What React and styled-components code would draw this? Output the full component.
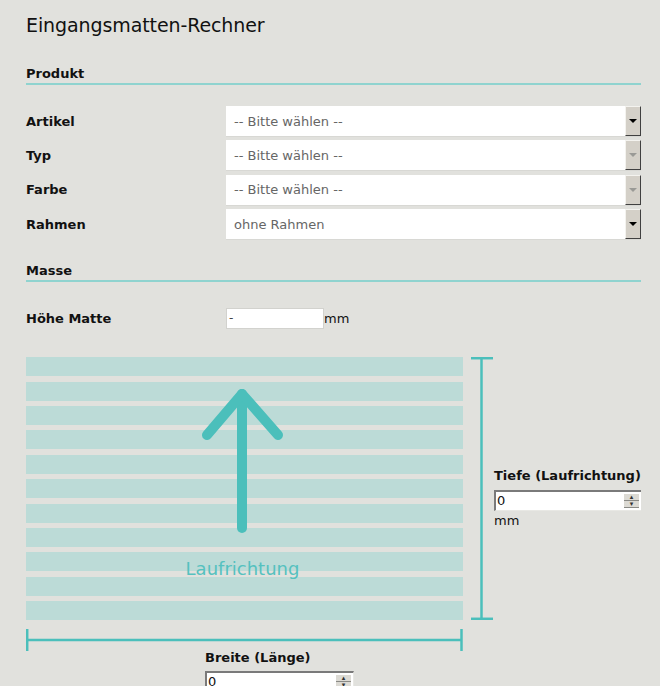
import * as React from 'react'
import styled, { createGlobalStyle } from 'styled-components'

const colors = {
  page: '#e1e1dd',
  text: '#111111',
  muted: '#666666',
  rule: '#8fd3cf',
  teal: '#4bbfbb',
  stripe: '#bcdbd7',
  button: '#d4d0c8',
}

const Global = createGlobalStyle`
  html, body {
    margin: 0;
    background: ${colors.page};
  }
  body {
    font-family: "DejaVu Sans", Verdana, sans-serif;
    color: ${colors.text};
  }
`

const selects = [
  { label: 'Artikel', value: '-- Bitte wählen --' },
  { label: 'Typ', value: '-- Bitte wählen --', disabled: true },
  { label: 'Farbe', value: '-- Bitte wählen --', disabled: true },
  { label: 'Rahmen', value: 'ohne Rahmen' },
]

const Arrow = () => (
  <svg width='437' height='263' viewBox='0 0 437 263'>
    <g fill='none' stroke={colors.teal} strokeWidth='10' strokeLinecap='round' strokeLinejoin='round'>
      <line x1='216' y1='37' x2='216' y2='171' />
      <polyline points='181,78 216,37 252,78' />
    </g>
  </svg>
)

const DepthBracket = () => (
  <svg width='31' height='263'>
    <g stroke={colors.teal} strokeWidth='2.5'>
      <line x1='18.5' y1='1' x2='18.5' y2='262' />
      <line x1='8' y1='1.2' x2='30' y2='1.2' />
      <line x1='8' y1='261.8' x2='30' y2='261.8' />
    </g>
  </svg>
)

const WidthBracket = () => (
  <svg width='437' height='22'>
    <g stroke={colors.teal} strokeWidth='2.5'>
      <line x1='1' y1='11' x2='436' y2='11' />
      <line x1='1.2' y1='0' x2='1.2' y2='22' />
      <line x1='435.5' y1='0' x2='435.5' y2='22' />
    </g>
  </svg>
)

const Spinner = ({ width }) => (
  <SpinBox width={width}>
    <SpinValue>0</SpinValue>
    <SpinButtons>
      <SpinButton>▴</SpinButton>
      <SpinButton>▾</SpinButton>
    </SpinButtons>
  </SpinBox>
)

const App = () => {
  return (
    <Root>
      <Global />
      <Title>Eingangsmatten-Rechner</Title>

      <SectionHeading>Produkt</SectionHeading>
      <SelectList>
        {selects.map((s) => (
          <Row key={s.label}>
            <Label>{s.label}</Label>
            <Select>
              <SelectText>{s.value}</SelectText>
              <SelectButton disabled={s.disabled}>
                <Triangle disabled={s.disabled} />
              </SelectButton>
            </Select>
          </Row>
        ))}
      </SelectList>

      <SectionHeading top={23}>Masse</SectionHeading>
      <HeightRow>
        <Label>Höhe Matte</Label>
        <TextInput>-</TextInput>
        <Unit>mm</Unit>
      </HeightRow>

      <Diagram>
        <Mat>
          {Array.from({ length: 11 }).map((_, i) => <Stripe key={i} />)}
          <Overlay>
            <Arrow />
            <Direction>Laufrichtung</Direction>
          </Overlay>
        </Mat>
        <DepthBracket />
        <DepthField>
          <FieldLabel>Tiefe (Laufrichtung)</FieldLabel>
          <Spinner width={148} />
          <Unit>mm</Unit>
        </DepthField>
        <WidthCell>
          <WidthBracket />
          <WidthField>
            <FieldLabel gap={5}>Breite (Länge)</FieldLabel>
            <Spinner width={149} />
          </WidthField>
        </WidthCell>
      </Diagram>
    </Root>
  )
}

const Root = styled.div`
  width: 615px;
  padding: 13px 0 0 26px;
  height: 673px;
  overflow: hidden;
`

const Title = styled.h1`
  margin: 0;
  font-size: 19px;
  line-height: 24px;
  font-weight: normal;
  letter-spacing: -0.1px;
`

const SectionHeading = styled.h2`
  margin: ${({ top }) => (top ? top : 29)}px 0 0;
  padding-bottom: 1px;
  font-size: 13px;
  line-height: 16px;
  font-weight: bold;
  border-bottom: 2px solid ${colors.rule};
`

const SelectList = styled.div`
  display: flex;
  flex-direction: column;
  gap: 3.4px;
  margin-top: 21px;
`

const Row = styled.div`
  display: grid;
  grid-template-columns: 200px 415px;
  align-items: center;
`

const Label = styled.div`
  font-size: 13px;
  font-weight: bold;
  line-height: 16px;
`

const Select = styled.div`
  display: flex;
  align-items: stretch;
  height: 31px;
  background: #ffffff;
  box-sizing: border-box;
  border-bottom: 1px solid #d8d8d4;
`

const SelectText = styled.div`
  flex: 1;
  display: flex;
  align-items: center;
  padding-left: 8px;
  font-size: 13px;
  color: ${colors.muted};
`

const SelectButton = styled.div`
  width: 16px;
  display: flex;
  align-items: center;
  justify-content: center;
  background: ${colors.button};
  box-sizing: border-box;
  border-top: 1px solid #f4f3ef;
  border-left: 1px solid #f4f3ef;
  border-right: 1px solid #404040;
  border-bottom: 1px solid #404040;
`

const Triangle = styled.span`
  width: 0;
  height: 0;
  border-left: 4px solid transparent;
  border-right: 4px solid transparent;
  border-top: 4px solid ${({ disabled }) => (disabled ? '#9a9a96' : '#000000')};
`

const HeightRow = styled.div`
  display: grid;
  grid-template-columns: 200px 98px auto;
  align-items: center;
  margin-top: 26px;
`

const TextInput = styled.div`
  height: 21px;
  box-sizing: border-box;
  background: #ffffff;
  padding-left: 2px;
  font-size: 12px;
  line-height: 19px;
  color: #444444;
  border: 1px solid #d2d2ce;
`

const Unit = styled.span`
  font-size: 13px;
  line-height: 16px;
`

const Diagram = styled.div`
  display: grid;
  grid-template-columns: 437px 31px 148px;
  grid-template-rows: 263px auto;
  margin-top: 28px;
`

const Mat = styled.div`
  position: relative;
  display: flex;
  flex-direction: column;
  justify-content: space-between;
`

const Stripe = styled.div`
  height: 19px;
  background: ${colors.stripe};
`

const Overlay = styled.div`
  position: absolute;
  inset: 0;
  display: flex;
  flex-direction: column;
  align-items: center;
`

const Direction = styled.div`
  position: absolute;
  left: 0;
  width: 433px;
  top: 201px;
  text-align: center;
  font-size: 18px;
  color: #55c1bf;
`

const DepthField = styled.div`
  padding-top: 111px;
  display: flex;
  flex-direction: column;
  align-items: flex-start;
`

const FieldLabel = styled.div`
  font-size: 13px;
  font-weight: bold;
  line-height: 16px;
  margin-bottom: ${({ gap }) => (gap ? gap : 6)}px;
`

const SpinBox = styled.div`
  width: ${({ width }) => width}px;
  height: 21px;
  box-sizing: border-box;
  display: flex;
  align-items: center;
  background: #ffffff;
  border-top: 2px solid #7a7a7a;
  border-left: 2px solid #7a7a7a;
  border-right: 1px solid #e8e8e4;
  border-bottom: 1px solid #e8e8e4;
  margin-bottom: 2px;
`

const SpinValue = styled.span`
  flex: 1;
  padding-left: 1px;
  font-size: 13px;
  line-height: 16px;
`

const SpinButtons = styled.div`
  display: flex;
  flex-direction: column;
  width: 15px;
  height: 14px;
  margin-right: 2px;
`

const SpinButton = styled.div`
  flex: 1;
  background: #dcdad4;
  border-bottom: 1px solid #8a8a86;
  font-size: 7px;
  line-height: 6px;
  text-align: center;
  color: #333333;
`

const WidthCell = styled.div`
  grid-column: 1 / 2;
  padding-top: 9px;
`

const WidthField = styled.div`
  padding-left: 179px;
  margin-top: -5px;
`

export default App
